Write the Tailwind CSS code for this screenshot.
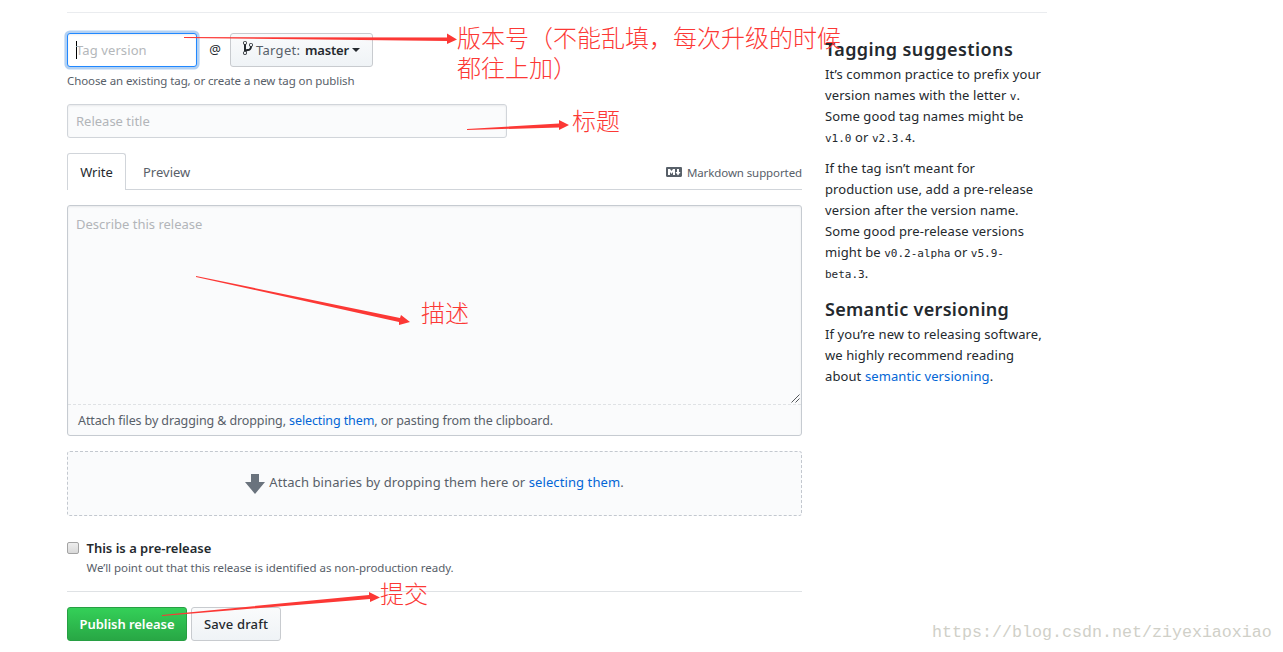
<!DOCTYPE html>
<html lang="en">
<head>
<meta charset="utf-8">
<title>New release</title>
<script src="https://cdn.jsdelivr.net/npm/@tailwindcss/browser@4"></script>
</head>
<body class="relative h-[652px] w-[1283px] overflow-hidden bg-white font-['Noto_Sans','Noto_Sans_CJK_SC',sans-serif] text-[13px] leading-[21px] text-[#24292e]">
<div class="ml-[67px] w-[980px] pt-3">
  <hr class="border-0 border-t border-[#eaecef]">
  <div class="flex gap-[23px]">
    <main class="w-[735px] shrink-0 pt-5">
      <div class="flex h-[34px] items-center">
        <div class="flex h-[34px] w-[130px] items-center rounded-[3px] border border-[#2188ff] bg-white pl-2 text-[#b4b7ba] shadow-[inset_0_1px_2px_rgba(27,31,35,0.075),0_0_0_0.2em_rgba(3,102,214,0.3)]">
          <span class="-mr-px h-[18px] w-px bg-black"></span><span class="tracking-[0.1px]">Tag version</span>
        </div>
        <span class="w-[33px] pl-[3px] pb-[2px] text-center text-[13px]">@</span>
        <button class="flex h-[34px] w-[143px] items-center rounded-[3px] border border-[#c8cbcf] bg-linear-to-b from-[#fafbfc] to-[#eff3f6] pl-3 whitespace-nowrap">
          <svg class="mb-1 mr-[3px] shrink-0" width="10" height="16" viewBox="0 0 10 16"><path fill="#24292e" fill-rule="evenodd" d="M10 5c0-1.11-.89-2-2-2a1.993 1.993 0 0 0-1 3.72v.3c-.02.52-.23.98-.63 1.38-.4.4-.86.61-1.38.63-.83.02-1.48.16-2 .45V4.72a1.993 1.993 0 0 0-1-3.72C.88 1 0 1.89 0 3a2 2 0 0 0 1 1.72v6.56c-.59.35-1 .99-1 1.72 0 1.11.89 2 2 2 1.11 0 2-.89 2-2 0-.53-.2-1-.53-1.36.09-.06.48-.41.59-.47.25-.11.56-.17.94-.17 1.05-.05 1.95-.45 2.75-1.25S8.95 7.77 9 6.73h-.02C9.59 6.37 10 5.73 10 5zM2 1.8c.66 0 1.2.55 1.2 1.2 0 .65-.55 1.2-1.2 1.2C1.35 4.2.8 3.65.8 3c0-.65.55-1.2 1.2-1.2zm0 12.41c-.66 0-1.2-.55-1.2-1.2 0-.65.55-1.2 1.2-1.2.65 0 1.2.55 1.2 1.2 0 .65-.55 1.2-1.2 1.2zm6-8c-.66 0-1.2-.55-1.2-1.2 0-.65.55-1.2 1.2-1.2.65 0 1.2.55 1.2 1.2 0 .65-.55 1.2-1.2 1.2z"/></svg>
          <span class="w-[49px] text-left tracking-[0.3px] text-[#586069]">Target:</span><span class="w-[44px] text-left font-semibold tracking-[-0.2px]">master</span>
          <span class="ml-[3px] border-x-4 border-t-4 border-x-transparent border-t-[#24292e]"></span>
        </button>
      </div>
      <p class="mt-1 h-[18px] text-[11.5px] leading-[19px] tracking-[-0.09px] text-[#586069]">Choose an existing tag, or create a new tag on publish</p>
      <div class="mt-[15px] flex h-[34px] w-[440px] items-center rounded-[3px] border border-[#d1d5da] bg-[#fafbfc] pl-2 text-[#b2b5b9] shadow-[inset_0_1px_2px_rgba(27,31,35,0.075)]">Release title</div>

      <div class="mt-[15px] flex h-[37px] items-end">
        <div class="h-[37px] w-[59px] rounded-t-[3px] border border-b-0 border-[#d1d5da] bg-white pt-2 text-center">Write</div>
        <div class="flex h-[37px] flex-1 items-center justify-between border-b border-[#d1d5da] pl-[17px] text-[#586069]">
          <span class="pt-[2px]">Preview</span>
          <span class="flex items-center gap-[5px] pt-[3px] text-[11.5px] tracking-[-0.1px]"><svg class="-mt-px" width="16" height="16" viewBox="0 0 16 16"><path fill="#586069" fill-rule="evenodd" d="M14.85 3H1.15C.52 3 0 3.52 0 4.15v7.69C0 12.48.52 13 1.15 13h13.69c.64 0 1.15-.52 1.15-1.15v-7.7C16 3.52 15.48 3 14.85 3zM9 11H7V8L5.500 9.920 4 8v3H2V5h2l1.500 2L7 5h2v6zm2.990.500L9.500 8H11V5h2v3h1.500l-2.510 3.500z"/></svg><span>Markdown supported</span></span>
        </div>
      </div>

      <div class="mt-[15px] flex h-[231px] flex-col rounded-[3px] border border-[#c6cbd1] bg-[#fafbfc] shadow-[inset_0_1px_2px_rgba(27,31,35,0.075)]">
        <div class="flex flex-1 items-start justify-between pl-2 text-[#b2b5b9]">
          <span class="pt-2">Describe this release</span>
          <svg class="mt-auto mr-px mb-px" width="9" height="9" viewBox="0 0 9 9"><path d="M.5 8.500l8-8M4.500 8.500l4-4" stroke="#55585c" fill="none"/></svg>
        </div>
        <p class="h-[31px] border-t border-dashed border-[#dfe2e5] pt-[5px] pl-[10px] text-[12.5px] tracking-[-0.11px] text-[#586069]">Attach files by dragging &amp; dropping, <a class="text-[#0366d6]">selecting them</a>, or pasting from the clipboard.</p>
      </div>

      <div class="mt-[15px] flex h-[65px] items-center justify-center rounded-[3px] border border-dashed border-[#c3c8cf] bg-[#fafbfc] text-[#586069]">
        <svg class="mr-1" width="20" height="20" viewBox="0 0 20 20"><path fill="#6a737d" d="M6 0h8v8h6L10 20 0 8h6z"/></svg>
        <p class="pb-[2px] tracking-[0.09px]">Attach binaries by dropping them here or <a class="text-[#0366d6]">selecting them</a>.</p>
      </div>

      <div class="mt-[22px] flex h-[38px]">
        <span class="mt-1 h-3 w-3 rounded-[2px] border border-[#a3a3a3] bg-linear-to-b from-[#eee] to-[#d9d9d9]"></span>
        <div class="ml-[7.5px]"><p class="h-5 font-semibold leading-5">This is a pre-release</p><p class="text-[11.5px] leading-[19px] tracking-[-0.05px] text-[#586069]">We’ll point out that this release is identified as non-production ready.</p></div>
      </div>
      <hr class="mt-[15px] border-0 border-t border-[#dfe2e5]">
      <div class="mt-[15px] flex gap-1 font-semibold">
        <button class="h-[34px] w-[120px] rounded-[3px] border border-[#279f43] bg-linear-to-b from-[#34d058] to-[#28a745] tracking-[-0.05px] text-white">Publish release</button>
        <button class="h-[34px] w-[90px] rounded-[3px] border border-[#c8cbcf] bg-linear-to-b from-[#fafbfc] to-[#eff3f6] font-medium tracking-[0.15px]">Save draft</button>
      </div>
    </main>
    <aside class="w-[222px] shrink-0 pt-[24px] tracking-[0.1px] whitespace-nowrap">
      <h2 class="text-[18px] font-semibold leading-[25px] tracking-[0.4px]">Tagging suggestions</h2>
      <p class="mt-[2px]">It’s common practice to prefix your<br>version names with the letter <code class="font-['DejaVu_Sans_Mono',monospace] text-[11px] leading-none tracking-normal">v</code>.<br>Some good tag names might be<br><code class="font-['DejaVu_Sans_Mono',monospace] text-[11px] leading-none tracking-normal">v1.0</code> or <code class="font-['DejaVu_Sans_Mono',monospace] text-[11px] leading-none tracking-normal">v2.3.4</code>.</p>
      <p class="mt-[10px]">If the tag isn’t meant for<br>production use, add a pre-release<br>version after the version name.<br>Some good pre-release versions<br>might be <code class="font-['DejaVu_Sans_Mono',monospace] text-[11px] leading-none tracking-normal">v0.2-alpha</code> or <code class="font-['DejaVu_Sans_Mono',monospace] text-[11px] leading-none tracking-normal">v5.9-</code><br><code class="font-['DejaVu_Sans_Mono',monospace] text-[11px] leading-none tracking-normal">beta.3</code>.</p>
      <h2 class="mt-[13px] text-[18px] font-semibold leading-[25px] tracking-[0.3px]">Semantic versioning</h2>
      <p class="mt-[2px]">If you’re new to releasing software,<br>we highly recommend reading<br>about <a class="text-[#0366d6]">semantic versioning</a>.</p>
    </aside>
  </div>
</div>

<svg class="absolute inset-0" width="1283" height="652" viewBox="0 0 1283 652" fill="#fc3835">
  <path d="M184 37L447 37.500V33.500L457 39.500L447 44V41L184 38z"/>
  <path d="M467 129L559 123.500V120L569 125L559 130V127.500L467 130z"/>
  <path d="M196 276L400 318L401 315L410 322L399 325V322L196 277z"/>
  <path d="M162 615L369 595V592L380 597.500L370 602V599L162 616z"/>
</svg>
<div class="absolute top-[22px] left-[457px] font-['Noto_Sans_CJK_SC',sans-serif] text-[24px] font-light leading-[30px] whitespace-nowrap text-[#fc3835]">版本号（不能乱填，每次升级的时候<br>都往上加）</div>
<div class="absolute top-[105px] left-[572px] font-['Noto_Sans_CJK_SC',sans-serif] text-[24px] font-light leading-[30px] text-[#fc3835]">标题</div>
<div class="absolute top-[297px] left-[421px] font-['Noto_Sans_CJK_SC',sans-serif] text-[24px] font-light leading-[30px] text-[#fc3835]">描述</div>
<div class="absolute top-[578px] left-[380px] font-['Noto_Sans_CJK_SC',sans-serif] text-[24px] font-light leading-[30px] text-[#fc3835]">提交</div>
<div class="absolute top-[622px] left-[932px] font-['Liberation_Mono',monospace] text-[16.660px] text-[#d0d0c8]">https://blog.csdn.net/ziyexiaoxiao</div>
</body>
</html>
